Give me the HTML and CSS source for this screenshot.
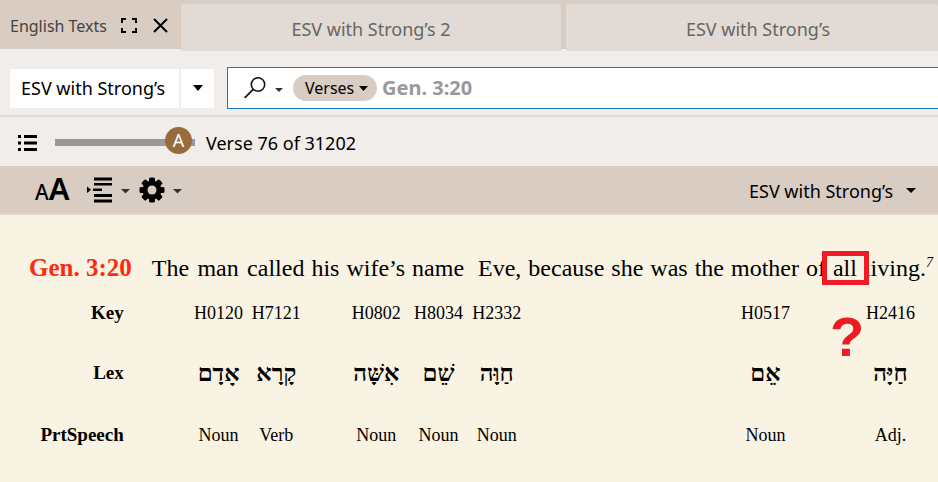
FILE: index.html
```html
<!DOCTYPE html>
<html lang="en">
<head>
<meta charset="utf-8">
<title>English Texts</title>
<link rel="stylesheet" href="styles.css">
</head>
<body>
<header class="tabs">
  <div class="zone">
    <span class="zone-title">English Texts</span>
    <button class="icon-button" aria-label="Expand"><svg width="16" height="15" viewBox="0 0 16 15"><path d="M1 5V1h4M11 1h4v4M15 10v4h-4M5 14H1v-4" fill="none" stroke="#000" stroke-width="2"/></svg></button>
    <button class="icon-button" aria-label="Close"><svg width="15" height="15" viewBox="0 0 15 15"><path d="M1 1l13 13M14 1L1 14" fill="none" stroke="#000" stroke-width="2"/></svg></button>
  </div>
  <button class="tab">ESV with Strong’s 2</button>
  <button class="tab tab-last">ESV with Strong’s</button>
</header>

<section class="search-row">
  <div class="module">
    <select class="module-select" aria-label="Text"><option>ESV with Strong’s</option></select>
    <span class="module-arrow"><svg class="caret" width="10" height="6" viewBox="0 0 10 6"><path d="M0 0h10L5 6z"/></svg></span>
  </div>
  <div class="search">
    <button class="icon-button find" aria-label="Search options">
      <svg width="22" height="22" viewBox="0 0 22 22"><circle cx="14" cy="7.500" r="6.700" fill="none" stroke="#111" stroke-width="1.600"/><path d="M9.200 12.300L.7 20.800" stroke="#111" stroke-width="1.800"/></svg>
      <svg class="caret soft" width="8" height="4" viewBox="0 0 8 4"><path d="M0 0h8L4 4z"/></svg>
    </button>
    <span class="pill">
      <select class="pill-select" aria-label="Search by"><option>Verses</option></select>
      <svg class="caret" width="9" height="5" viewBox="0 0 9 5"><path d="M0 0h9L4.500 5z"/></svg>
    </span>
    <input class="query" type="text" value="Gen. 3:20" aria-label="Search text">
  </div>
</section>

<section class="position-row">
  <button class="icon-button list" aria-label="Verse list"><svg width="19" height="16" viewBox="0 0 19 16"><path d="M0 0h3v3H0zM6 0h13v3H6zM0 6.500h3v3H0zM6 6.500h13v3H6zM0 13h3v3H0zM6 13h13v3H6z"/></svg></button>
  <span class="slider">
    <input type="range" min="0" max="100" value="97" aria-label="Context">
    <span class="slider-mark">A</span>
  </span>
  <output>Verse 76 of 31202</output>
</section>

<section class="toolbar">
  <button class="icon-button text-size" aria-label="Text size"><span class="small-a">A</span><span class="big-a">A</span></button>
  <button class="icon-button menu-button" aria-label="Line layout">
    <svg width="26" height="26" viewBox="0 0 26 26"><path d="M7 0.500h18v3H7zM7 6h18v2.500H7zM6 11.500h9v2.500H6zM7 17h18v3H7zM7 22.500h18v3H7zM0 9.500l4 3.200-4 3.200z"/></svg>
    <svg class="caret soft" width="9" height="5" viewBox="0 0 9 5"><path d="M0 0h9L4.500 4.500z"/></svg>
  </button>
  <button class="icon-button menu-button" aria-label="Settings">
    <svg width="26" height="26" viewBox="-13 -13 26 26"><g><rect x="-3" y="-12.500" width="6" height="25" rx="1.500"/><rect x="-3" y="-12.500" width="6" height="25" rx="1.500" transform="rotate(45)"/><rect x="-3" y="-12.500" width="6" height="25" rx="1.500" transform="rotate(90)"/><rect x="-3" y="-12.500" width="6" height="25" rx="1.500" transform="rotate(135)"/><circle r="9.500"/><circle r="4.500" fill="#d8ccc3"/></g></svg>
    <svg class="caret soft" width="9" height="5" viewBox="0 0 9 5"><path d="M0 0h9L4.500 4.500z"/></svg>
  </button>
  <span class="text-choice">
    <select aria-label="Displayed text"><option>ESV with Strong’s</option></select>
    <svg class="caret" width="10" height="5" viewBox="0 0 10 5"><path d="M0 0h10L5 5z"/></svg>
  </span>
</section>

<main class="reader">
  <table>
    <thead>
      <tr>
        <th class="verse" scope="col">Gen. 3:20</th>
        <th scope="col">The</th><th scope="col">man</th><th scope="col">called</th><th scope="col">his</th><th scope="col">wife’s</th><th scope="col">name</th><th class="spaced" scope="col">Eve,</th><th scope="col">because</th><th scope="col">she</th><th scope="col">was</th><th scope="col">the</th><th scope="col">mother</th><th scope="col">of</th><th class="queried" scope="col">all<span class="frame"></span><span class="question">?</span></th><th class="joined" scope="col">living</th><th class="mark" scope="col">.<sup>7</sup></th>
      </tr>
    </thead>
    <tbody>
      <tr class="key">
        <th scope="row">Key</th>
        <td></td><td>H0120</td><td>H7121</td><td></td><td>H0802</td><td>H8034</td><td>H2332</td><td></td><td></td><td></td><td></td><td>H0517</td><td></td><td></td><td>H2416</td><td></td>
      </tr>
      <tr class="lex" lang="he">
        <th scope="row" lang="en">Lex</th>
        <td></td><td>אָדָם</td><td>קָרָא</td><td></td><td>אִשָּׁה</td><td>שֵׁם</td><td>חַוָּה</td><td></td><td></td><td></td><td></td><td>אֵם</td><td></td><td></td><td>חַיָּה</td><td></td>
      </tr>
      <tr class="speech">
        <th scope="row">PrtSpeech</th>
        <td></td><td>Noun</td><td>Verb</td><td></td><td>Noun</td><td>Noun</td><td>Noun</td><td></td><td></td><td></td><td></td><td>Noun</td><td></td><td></td><td>Adj.</td><td></td>
      </tr>
    </tbody>
  </table>
</main>
</body>
</html>
```
FILE: styles.css
```css
* { box-sizing: border-box; }

body {
  margin: 0;
  min-height: 100vh;
  display: flex;
  flex-direction: column;
  background: #f0edea;
  color: #000;
  font-family: "Noto Sans", "Open Sans", sans-serif;
  font-size: 18px;
  line-height: 24px;
}

button, select, input {
  margin: 0;
  padding: 0;
  border: 0;
  background: none;
  color: inherit;
  font: inherit;
  appearance: none;
}

svg { display: block; flex: none; }
.caret { fill: #000; pointer-events: none; }
.caret.soft { fill: #333; }
.icon-button { display: flex; align-items: center; }

/* Tab strip */
.tabs {
  display: flex;
  height: 51px;
  padding-top: 4px;
  background: linear-gradient(#d9ccc2 49px, #f0edea 49px);
}
.zone {
  display: flex;
  align-items: center;
  gap: 16px;
  width: 181px;
  padding: 0 0 4px 10px;
  color: #444;
  font-size: 16px;
}
.zone-title { width: 95px; white-space: nowrap; }
.tab {
  flex: 380 1 0;
  margin-right: 5px;
  padding-top: 3px;
  border-radius: 2px 2px 0 0;
  background: #e2dad4;
  color: #666;
}
.tab-last { flex-grow: 372; margin-right: 0; text-indent: 12px; }

/* Search row */
.search-row {
  display: flex;
  gap: 13px;
  padding: 16px 0 6px 10px;
  border-bottom: 2px solid #ddd9d6;
}
.module { display: flex; align-items: center; gap: 2px; }
.module-select {
  width: 169px;
  height: 39px;
  padding-left: 11px;
  background: #fff;
}
.module-arrow {
  display: flex;
  align-items: center;
  justify-content: center;
  width: 33px;
  height: 39px;
  background: #fff;
}
.search {
  flex: 1;
  display: flex;
  align-items: center;
  height: 42px;
  padding-left: 16px;
  border: 1px solid #1979ca;
  border-right: 0;
  background: #fff;
}
.find { gap: 9px; margin-right: 10px; }
.find .caret { margin-top: 4px; }
.pill {
  display: flex;
  align-items: center;
  height: 26px;
  padding: 0 9px 0 12px;
  border-radius: 13px;
  background: #d9ccc2;
  font-size: 16px;
}
.pill-select { width: 54px; }
.query {
  flex: 1;
  min-width: 0;
  margin-left: 5px;
  color: #999;
  font-size: 20px;
  font-weight: 700;
}

/* Position row */
.position-row {
  display: flex;
  align-items: center;
  height: 49px;
  padding: 2px 0 0 18px;
}
.list { margin-right: 18px; }
.slider { position: relative; width: 140px; height: 31px; margin-right: 11px; }
.slider input { display: block; width: 100%; height: 31px; }
.slider input::-webkit-slider-runnable-track { height: 7px; background: #999; }
.slider input::-webkit-slider-thumb {
  appearance: none;
  width: 27px;
  height: 27px;
  margin-top: -12px;
  border-radius: 50%;
  background: #996a3d;
}
.slider-mark {
  position: absolute;
  top: 1px;
  right: 3px;
  width: 27px;
  color: #fff;
  text-align: center;
  pointer-events: none;
}

/* Toolbar */
.toolbar {
  display: flex;
  align-items: center;
  height: 49px;
  padding: 0 22px 0 35px;
  border-bottom: 2px solid #e1d6cb;
  background: #d8ccc3;
}
.text-size { align-items: baseline; width: 35px; margin-right: 17px; }
.small-a { font-size: 21px; font-weight: 500; }
.big-a { font-size: 31px; font-weight: 600; }
.menu-button { gap: 8px; margin-right: 9px; }
.menu-button .caret { margin-top: 4px; }
.text-choice { display: flex; align-items: center; gap: 12px; margin-left: auto; padding-top: 2px; }

/* Interlinear text */
.reader {
  flex: 1;
  padding: 36px 0 0 29px;
  background: #f9f3e3;
  font-family: "Liberation Serif", serif;
}
table { border-collapse: collapse; }
th, td {
  padding: 0 1px;
  font-size: 18px;
  text-align: center;
  white-space: nowrap;
}
thead th { height: 34px; padding: 0 4px 0 3px; font-size: 24px; font-weight: 400; }
thead .verse {
  padding: 0 17px 0 0;
  color: #ff2a0a;
  font-size: 25px;
  font-weight: 700;
  text-align: left;
}
tbody th { padding-right: 25px; font-size: 19px; text-align: right; }
thead .spaced { padding-left: 10px; }
thead .joined { padding-right: 0; }
thead .mark { padding: 0; }
sup { font-size: 14px; font-style: italic; line-height: 0; }
.key > * { height: 56px; }
.lex > * { height: 64px; }
.speech > * { height: 60px; }
.lex td { font-size: 24px; font-weight: 700; }

/* Annotation over the verse */
.queried { position: relative; }
.frame {
  position: absolute;
  inset: 0 -8px;
  border: 5px solid #ee1b24;
}
.question {
  position: absolute;
  top: 58px;
  left: 0;
  right: 0;
  color: #ee1b24;
  font: 700 56px/56px "Liberation Sans", sans-serif;
}
```
